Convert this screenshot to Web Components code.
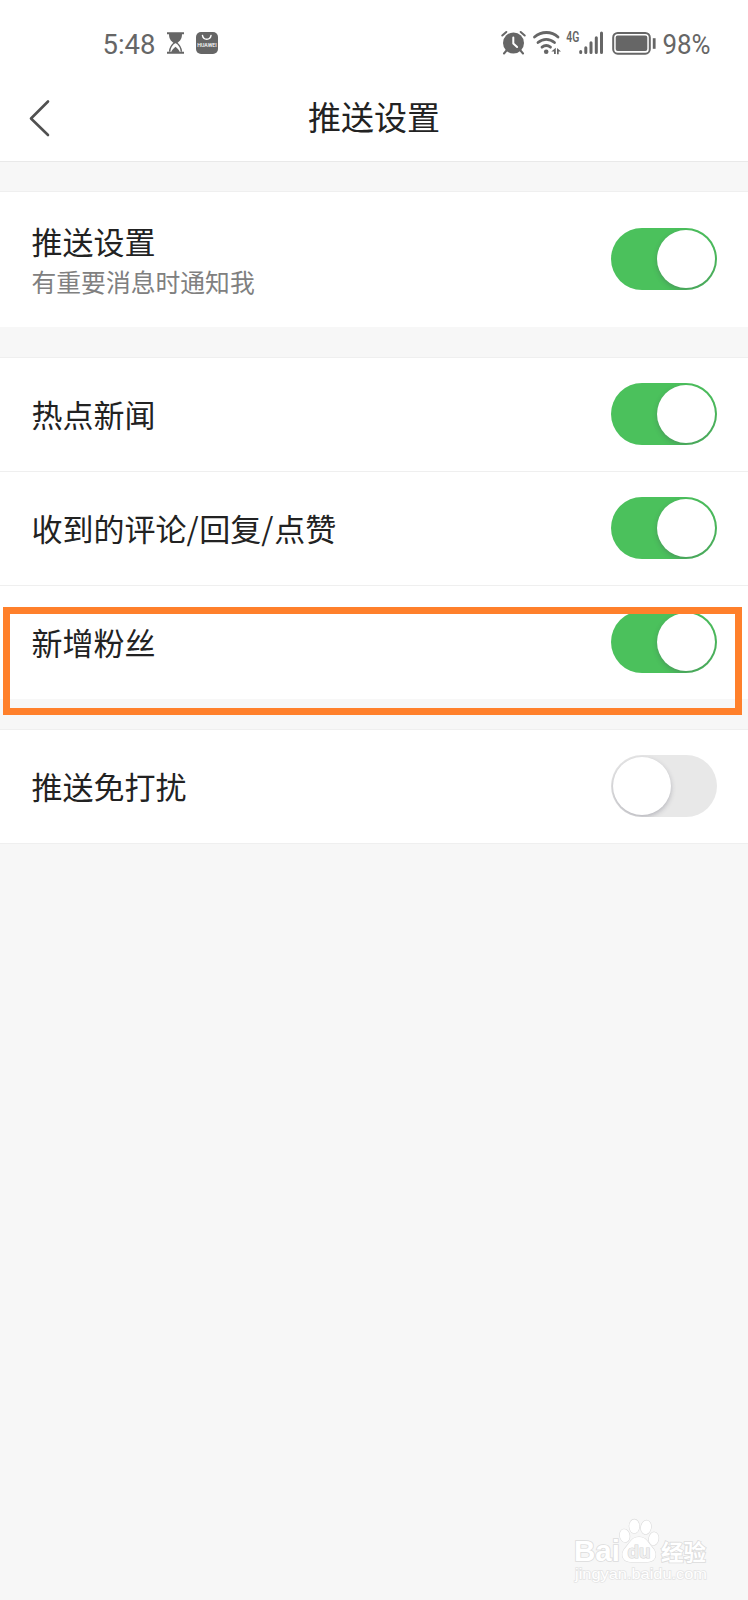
<!DOCTYPE html>
<html lang="zh-CN">
<head>
<meta charset="utf-8">
<title>推送设置</title>
<style>
html,body{margin:0;padding:0}
body{width:748px;height:1600px;overflow:hidden;background:#f7f7f7;font-family:"Noto Sans CJK SC",sans-serif;color:#222}
</style>
</head>
<body>
<push-settings></push-settings>
<script>
const define = (name, html) => customElements.define(name, class extends HTMLElement {
  constructor() {
    super();
    this.attachShadow({mode: 'open'}).innerHTML = html;
  }
});

define('status-bar', `
<style>
:host{display:block;height:80px;background:#fff}
svg{display:block}
text{font-family:Roboto,sans-serif;fill:#666}
</style>
<svg width="748" height="80" viewBox="0 0 748 80" fill="#666">
  <text x="102.500" y="54" font-size="27.500" textLength="53" lengthAdjust="spacingAndGlyphs">5:48</text>
  <path d="M167 32.300h17v2h-17zM169 34h13c0 4.500-1.500 6.700-5 9.200h-3c-3.500-2.500-5-4.700-5-9.200zM167 51.800h17v2h-17z"/>
  <path d="M174.800 42.500c-3 2.200-5 4.500-5.200 9.300M176.200 42.500c3 2.200 5 4.500 5.200 9.300" fill="none" stroke="#666" stroke-width="1.500"/>
  <path d="M171.300 52c.5-2.200 2.300-3.800 4.200-5.300c1.900 1.500 3.700 3.100 4.200 5.300z"/>
  <rect x="196" y="32" width="22" height="22" rx="5"/>
  <path d="M202.500 35.500c.8 5 7.700 5 8.500 0" fill="none" stroke="#fff" stroke-width="1.500" stroke-linecap="round"/>
  <text x="197.300" y="47.400" font-size="4.900" font-weight="500" textLength="19.400" lengthAdjust="spacingAndGlyphs" style="fill:#fff">HUAWEI</text>
  <g>
    <circle cx="513.500" cy="43" r="10.500"/>
    <path d="M502.300 35.500l4-3.500M520.700 32l4 3.500M506.500 50.500l-2.500 3M520.500 50.500l2.500 3" stroke="#666" stroke-width="2" stroke-linecap="round"/>
    <path d="M513.300 37.500v6l3.800 3.500" stroke="#fff" stroke-width="2" fill="none" stroke-linecap="round" stroke-linejoin="round"/>
  </g>
  <g fill="none" stroke="#666" stroke-width="2.800" stroke-linecap="round">
    <path d="M534.500 37c7-6 17-6 23.500 0"/>
    <path d="M538 42.500c5-4.300 11.500-4.300 16.500 0"/>
    <path d="M542 47.200c2.700-2.200 5.800-2.200 8.500 0"/>
  </g>
  <circle cx="546.200" cy="51.700" r="2.300"/>
  <path d="M551.300 51.500l4.500-3.700v6.200h-1.800v-2.500zM557 48v6.200h1.700v-2.700h2.300z"/>
  <text x="566.300" y="42" font-size="14.500" font-weight="600" textLength="13" lengthAdjust="spacingAndGlyphs">4G</text>
  <g stroke="#666" stroke-width="3" stroke-linecap="round">
    <path d="M580.700 51.600v.8M585.800 47.700v4.700M591 42.700v9.700M596.300 37.700v14.700M601.500 33v19.400"/>
  </g>
  <rect x="613.200" y="33" width="36.600" height="20.700" rx="4.500" fill="none" stroke="#666" stroke-width="2"/>
  <rect x="615.700" y="35.600" width="31.600" height="15.500" rx="2"/>
  <path d="M654.200 38.200v10.600" stroke="#666" stroke-width="2.800"/>
  <text x="662.500" y="54" font-size="27.500" textLength="48" lengthAdjust="spacingAndGlyphs">98%</text>
</svg>`);

define('nav-bar', `
<style>
:host{display:grid;grid-template-columns:80px 1fr 80px;align-items:center;height:81px;background:#fff;border-bottom:1px solid #e9e9e9;box-sizing:content-box}
svg{display:block}
h1{margin:0;padding-bottom:10px;font-size:33px;line-height:48px;font-weight:400;text-align:center;color:#222}
</style>
<svg width="80" height="81" viewBox="0 0 80 81" fill="none" stroke="#505050" stroke-width="2.600" stroke-linecap="round" stroke-linejoin="round"><path d="M48 21.500L31 38.500L48 55"/></svg>
<h1><slot></slot></h1>`);

define('settings-group', `
<style>
:host{display:block;background:#fff;margin-bottom:30px}
</style>
<slot></slot>`);

define('setting-row', `
<style>
:host{display:flex;align-items:center;justify-content:space-between;box-sizing:border-box;height:114px;padding:0 31px 1px 31.500px;border-top:1px solid #efefef}
:host([tall]){height:136px}
.copy{display:flex;flex-direction:column;white-space:nowrap}
.label{font-size:31px;line-height:44px}
.sub{font-size:24.800px;line-height:36px;color:#808080}
:host([tall]) .copy{padding-bottom:1px}
</style>
<div class="copy"><span class="label"><slot></slot></span><span class="sub"><slot name="sub"></slot></span></div>
<slot name="control"></slot>`);

define('toggle-switch', `
<style>
:host{display:flex;align-items:center;box-sizing:border-box;width:106px;height:62.500px;padding:0 2px 0 1.500px;border-radius:32px;background:#e8e8e8;overflow:hidden}
:host([on]){background:#4bc15c;justify-content:flex-end}
i{display:block;width:58.500px;height:58.500px;border-radius:50%;background:#fff;box-shadow:0 2px 5px rgba(70,70,90,.32)}
</style>
<i></i>`);

define('highlight-frame', `
<style>
:host{display:block;position:absolute;left:3px;top:607.400px;width:739px;height:107.500px;box-sizing:border-box;border:7px solid #ff802b}
</style>`);

define('baidu-watermark', `
<style>
:host{display:block;position:absolute;left:560px;top:1500px}
svg{display:block}
</style>
<svg width="188" height="100" viewBox="0 0 188 100" fill="#fff" stroke="#dcdcdc" stroke-width="1.600" paint-order="stroke">
  <text x="14" y="61" font-family="Liberation Sans,sans-serif" font-weight="700" font-size="29" textLength="46" lengthAdjust="spacingAndGlyphs">Bai</text>
  <path stroke-width="1.200" d="M79 37c7 0 8.500 5 12.500 9.500c3.500 3.800 5 7 3.500 11c-2 5-7 4.500-16 4.500s-14 .5-16-4.500c-1.500-4 0-7.200 3.500-11c4-4.500 5.500-9.500 12.500-9.500z"/>
  <g stroke-width="1.200">
    <ellipse cx="64.700" cy="35.700" rx="4.900" ry="6.500" transform="rotate(-12 64.700 35.700)"/>
    <ellipse cx="74.300" cy="26.300" rx="5" ry="6.900"/>
    <ellipse cx="86" cy="27.300" rx="5" ry="6.900" transform="rotate(10 86 27.300)"/>
    <ellipse cx="93.700" cy="38.700" rx="4.800" ry="6.500" transform="rotate(8 93.700 38.700)"/>
  </g>
  <text x="67.500" y="58" font-family="Liberation Sans,sans-serif" font-weight="700" font-size="19" textLength="23" lengthAdjust="spacingAndGlyphs" fill="#efefef" stroke="#d6d6d6" stroke-width="1.200">du</text>
  <text x="101" y="60" font-family="Noto Sans CJK SC,sans-serif" font-weight="700" font-size="22" textLength="45" lengthAdjust="spacingAndGlyphs">经验</text>
  <text x="15" y="79" font-family="Liberation Sans,sans-serif" font-size="15" textLength="132" lengthAdjust="spacingAndGlyphs" stroke="#e4e4e4" stroke-width="1.400">jingyan.baidu.com</text>
</svg>`);

define('push-settings', `
<style>
:host{display:block;position:relative;width:748px;height:1600px;overflow:hidden;background:#f7f7f7}
nav-bar{margin-bottom:29px}
.last{border-bottom:1px solid #efefef}
.slash{letter-spacing:.7px}
</style>
<status-bar></status-bar>
<nav-bar>推送设置</nav-bar>
<settings-group>
  <setting-row tall>推送设置<span slot="sub">有重要消息时通知我</span><toggle-switch slot="control" on></toggle-switch></setting-row>
</settings-group>
<settings-group>
  <setting-row>热点新闻<toggle-switch slot="control" on></toggle-switch></setting-row>
  <setting-row>收到的评论<span class="slash">/</span>回复<span class="slash">/</span>点赞<toggle-switch slot="control" on></toggle-switch></setting-row>
  <setting-row>新增粉丝<toggle-switch slot="control" on></toggle-switch></setting-row>
</settings-group>
<settings-group class="last">
  <setting-row>推送免打扰<toggle-switch slot="control"></toggle-switch></setting-row>
</settings-group>
<highlight-frame></highlight-frame>
<baidu-watermark></baidu-watermark>`);
</script>
</body>
</html>
